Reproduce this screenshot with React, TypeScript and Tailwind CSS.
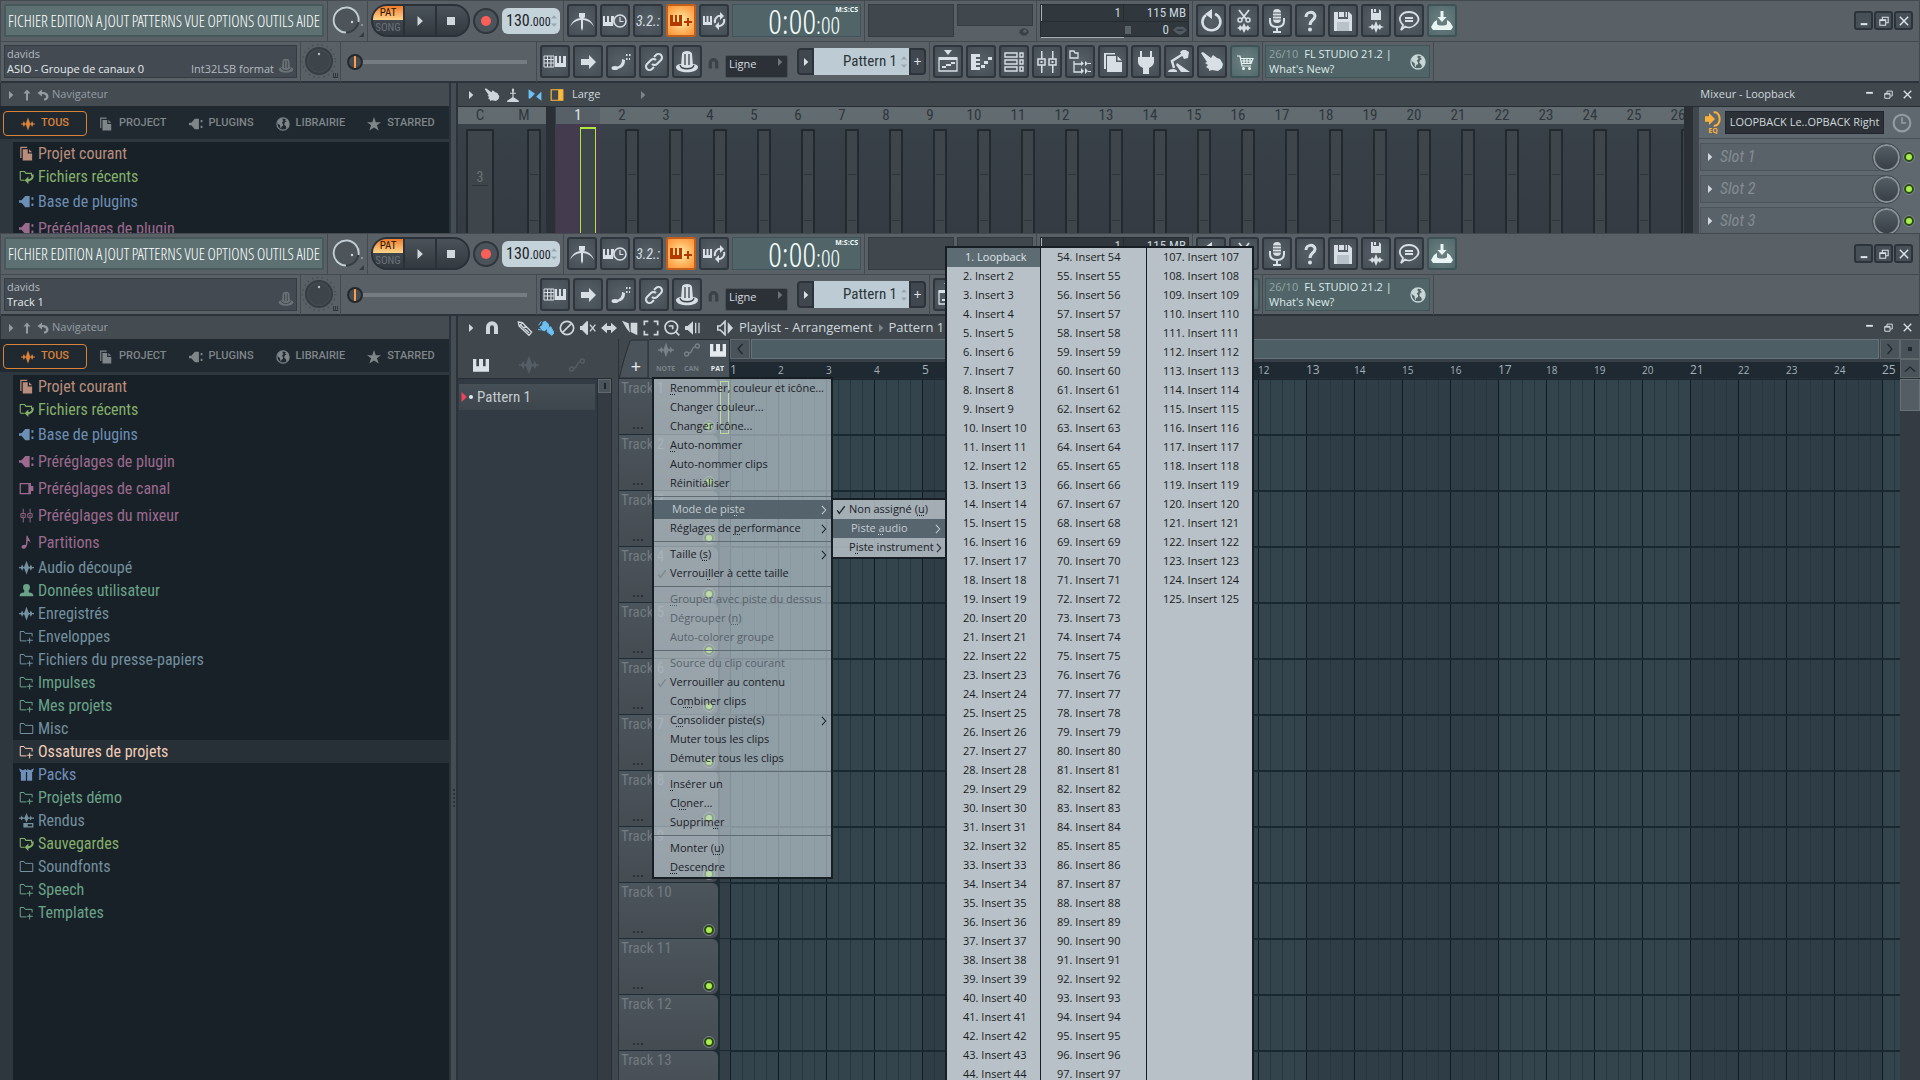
import type { ReactNode } from "react";

const light = "font-['Open_Sans_Condensed_Light','Roboto_Condensed',sans-serif]";
const cond = "font-['Roboto_Condensed','Open_Sans_Condensed',sans-serif]";
const sans = "font-['Open_Sans','Noto_Sans',sans-serif]";

const icons: Record<string, ReactNode> = {
  metronome: (
    <>
      <path d="M0 18c2-6 6-9 12-9s10 3 12 9c-3-5-7-7-12-7S3 13 0 18z" />
      <path d="M11 6h2v13l-1 3-1-3z" />
      <path d="M9 4h6v4l-3 3-3-3z" />
    </>
  ),
  wait: (
    <>
      <path d="M0 7h2v6h2V7h2v6h2V7h3v2l-1 8H0z" />
      <circle cx="17" cy="12" r="6" fill="none" stroke="currentColor" strokeWidth="1.500" />
      <path d="M17 8v4.500h3.500" fill="none" stroke="currentColor" strokeWidth="1.200" />
    </>
  ),
  pianoPlus: <path d="M1 6h3v7h2V6h2v7h2V6h3v11H1zM18 9h2v3h3v2h-3v3h-2v-3h-3v-2h3z" />,
  loop: (
    <>
      <path d="M1 7h2v6h1.500V7h2v6H8V7h2v9H1z" />
      <path d="M13 14c-1-4 2-8 7-7M22 10c1 4-2 8-7 7" fill="none" stroke="currentColor" strokeWidth="2" />
      <path d="M18 3l4 4-4 4zM17 21l-4-4 4-4z" />
    </>
  ),
  typing: (
    <>
      <path d="M1 6h10v11H1zM4.500 6v11M8 6v11M1 9.500h10M1 13h10" fill="none" stroke="currentColor" />
      <path d="M12 6h2v7h2V6h2v7h2V6h3v11H12z" />
    </>
  ),
  arrow: <path d="M5 9h8V5l7 7-7 7v-4H5z" />,
  slide: (
    <>
      <path d="M8 17c4-2 5-4 5-8l3 1c0 5-2 8-8 9z" />
      <ellipse cx="6" cy="18" rx="3.500" ry="2" />
      <path d="M17 4h1.500v2H17zM20 4h1.500v2H20zM17 8h1.500v2H17zM20 8h1v2h-1z" />
    </>
  ),
  link: (
    <path
      d="M10 14a3.500 3.500 0 0 0 5 0l4-4a3.500 3.500 0 0 0-5-5l-2 2M14 10a3.500 3.500 0 0 0-5 0l-4 4a3.500 3.500 0 0 0 5 5l2-2"
      fill="none"
      stroke="currentColor"
      strokeWidth="2"
    />
  ),
  knobHat: (
    <>
      <path d="M1 17c0-2 3-3 5-3h12c2 0 5 1 5 3 0 7-22 7-22 0z" />
      <path d="M7 4c0-4 10-4 10 0l1 12c0 3-12 3-12 0z" />
      <path d="M10 4v11M14 4v11M5 15c1 5 13 5 14 0" fill="none" stroke="#3c444b" strokeWidth="1.300" />
    </>
  ),
  magnet: <path d="M3 21V11a9 9 0 0 1 18 0v10h-6V11a3 3 0 0 0-6 0v10z" />,
  playlist: (
    <>
      <path d="M8 0h8l-4 5z" />
      <path d="M3 8h18v13H3z" fill="none" stroke="currentColor" strokeWidth="1.300" />
      <path d="M3 7h18v3H3zM6 16h4v2H6zM10 14h5v2h-5zM15 12h4v2h-4z" />
    </>
  ),
  pianoRoll: (
    <>
      <path d="M2 4h9v3H7v2h4v2H7v2h4v2H7v2h4v3H2z" />
      <path d="M12 15h4v3h-4zM15 11h4v3h-4zM19 7h4v3h-4z" />
    </>
  ),
  rack: (
    <path
      d="M3 3h12v4H3zM3 10h12v4H3zM3 17h12v4H3zM18 3h3v4h-3zM18 10h3v4h-3zM18 17h3v4h-3z"
      fill="none"
      stroke="currentColor"
      strokeWidth="1.400"
    />
  ),
  mixer: (
    <>
      <path d="M3 9h7v6H3zM14 9h7v6h-7z" fill="none" stroke="currentColor" strokeWidth="1.500" />
      <path d="M6 1h1.500v8H6zM6 15h1.500v8H6zM17 1h1.500v8H17zM17 15h1.500v8H17zM5.500 11h2v2h-2zM16.500 11h2v2h-2z" />
    </>
  ),
  tree: (
    <>
      <path d="M2 1h4l1 2h3v5H2zM6 11v11h7M6 14h7" fill="none" stroke="currentColor" strokeWidth="1.300" />
      <path d="M13 11l3 2.500-3 2.500zM17 11l3 2.500-3 2.500zM13 18l3 3-3 3zM17 18l3 3-3 3zM20 13h3v1h-3zM20 21h3v1h-3z" />
    </>
  ),
  copies: (
    <>
      <path d="M3 3h11v1.500H5V19H3z" />
      <path d="M6 6h9v6h6v10H6z" />
      <path d="M16.500 6l4.500 4.500h-4.500z" />
    </>
  ),
  plug: <path d="M6 1h2v6h8V1h2v6h2v5c0 3-3 5-5 6v6H9v-6c-2-1-5-3-5-6V7h2z" />,
  lamp: (
    <>
      <path d="M13 2l4-3 5 3-1 6-4 1z" />
      <path d="M16 4L5 11l2 7" fill="none" stroke="currentColor" strokeWidth="2.500" />
      <path d="M1 22c0-4 10-4 9 0zM10 13l13 9h-9l-5-7z" />
    </>
  ),
  hand: <path d="M1 3l2-1 8 6 2-3 4 3 3 1 3 5-1 4-4 3-6-1-3 1v-2l-3-2 2-2-3-2 2-1z" />,
  cart: (
    <>
      <path d="M4 6h3l2 10h9M7.500 8.500H20l-2 5H9M11 8v5M14 8v5M17 8v5M8 11h11" fill="none" stroke="currentColor" strokeWidth="1.200" />
      <circle cx="10.500" cy="18.500" r="1.500" />
      <circle cx="16.500" cy="18.500" r="1.500" />
    </>
  ),
  undo: (
    <>
      <path d="M7 6a9 8.500 0 1 0 9-1" fill="none" stroke="currentColor" strokeWidth="2.600" />
      <path d="M13 0v10L6 5z" />
    </>
  ),
  scissors: (
    <>
      <path d="M7 1l7 9M17 1l-7 9" stroke="currentColor" strokeWidth="1.800" />
      <circle cx="8" cy="11" r="2" fill="none" stroke="currentColor" strokeWidth="1.500" />
      <circle cx="16" cy="11" r="2" fill="none" stroke="currentColor" strokeWidth="1.500" />
      <path d="M5 19l2-1 1-2 2 2 2-4 2 4 2-2 1 2 2 1-2 1-1 2-2-2-2 4-2-4-2 2-1-2z" />
    </>
  ),
  mic: (
    <>
      <rect x="8" y="0" width="8" height="14" rx="4" />
      <path d="M8 4h8M8 7h8M8 10h8" stroke="#4a5259" />
      <path d="M5 9v3c0 4 3 6 7 6s7-2 7-6V9M12 18v4M8 23h8" fill="none" stroke="currentColor" strokeWidth="2" />
    </>
  ),
  help: (
    <>
      <path d="M8 8c0-6 9-6 9-1 0 4-5 4-5 9" fill="none" stroke="currentColor" strokeWidth="3" />
      <circle cx="12" cy="20.500" r="2" />
    </>
  ),
  save: (
    <>
      <path d="M3 3h4v7h10V3h1l3 3v16H3z" />
      <path d="M8 3h5v5H8zM14.500 3H16v5h-1.500z" />
      <path d="M6 13h12v9H6z" fill="#b9c2c8" />
    </>
  ),
  saveNew: (
    <>
      <path d="M7 0h2v4h6V0l2 2v9H7zM10 0h2v3h-2z" />
      <path d="M4 18l3-1 1-2 2 2 2-5 2 5 2-2 1 2 3 1-3 1-1 2-2-2-2 5-2-5-2 2-1-2z" />
    </>
  ),
  chat: (
    <path
      d="M4 21l2-5C-1 9 5 3 12 3s12 6 8 11-9 5-12 3.500zM8 9h8M8 12h8"
      fill="none"
      stroke="currentColor"
      strokeWidth="1.800"
    />
  ),
  download: (
    <>
      <path d="M10.500 2h3v6h3l-4.500 5L7.500 8h3z" />
      <path d="M4 13l3-2v4c1 2 9 2 10 0v-4l3 2 3 5-2 3H3l-2-3z" />
    </>
  ),
  pages: (
    <>
      <path d="M2 1h11v2H4v16H2z" />
      <path d="M6 5h8v7h7v11H6z" />
      <path d="M16 5l5 5h-5z" />
    </>
  ),
  folderBack: (
    <>
      <path d="M2 17V4h7l2 3h9v4M2 18h7" fill="none" stroke="currentColor" strokeWidth="1.700" />
      <path d="M23 8c2 8-3 11-8 12v4l-6-6 6-6v4c3 0 6-2 5-6z" />
    </>
  ),
  folder: <path d="M2 4h6l2 3h12v13H2z" fill="none" stroke="currentColor" strokeWidth="1.600" />,
  folderPlus: (
    <path
      d="M12 19H2V4h6l2 3h11v5M17 14v9M13 18h9"
      fill="none"
      stroke="currentColor"
      strokeWidth="1.600"
    />
  ),
  plugin: <path d="M0 10h4l6-7h7v18h-7l-6-7H0zM20 5h3v4h-3zM20 15h3v4h-3z" />,
  channel: (
    <>
      <path d="M2 4h16v16H2z" fill="none" stroke="currentColor" strokeWidth="2" />
      <path d="M15 4h4v16h-4zM19 8h4v8h-4z" />
    </>
  ),
  note: <path d="M12 1h2c0 4 5 6 4 12-1-3-2-4-4-4-1 8-2 13-7 13-6-1-2-8 4-6z" />,
  wave: (
    <path d="M0 11h3l2-4 2 4h1l1-2 3-8 3 8 1 2h1l2-4 2 4h3v2h-3l-2 4-2-4h-1l-1 2-3 8-3-8-1-2H7l-2 4-2-4H0z" />
  ),
  user: (
    <>
      <circle cx="12" cy="7" r="5.500" />
      <path d="M9 11h6l1 4c5 0 7 2 7 6H1c0-4 2-6 7-6z" />
    </>
  ),
  packs: <path d="M0 2l6 3 5-2v2h2V3l5 2 6-3-2 6h-1v14h-8V8h-2v14H3V8H2z" />,
  render: (
    <>
      <path d="M0 7h3l1-3 2 3h3l3-7 3 7h2l2-3 1 3h4v2h-4l-1 3-2-3h-2l-3 6-3-6H6l-2 3-1-3H0z" />
      <path d="M8 17h14v5H8z" fill="none" stroke="currentColor" strokeWidth="2" />
      <path d="M8 17h6v5H8z" />
    </>
  ),
  globe: (
    <>
      <circle cx="12" cy="12" r="10.500" fill="none" stroke="currentColor" strokeWidth="2" />
      <path d="M3 8c1-4 5-6 9-6l-1 3 2 2-3 3 2 2v3l-3 2v3c-2-1-2-4-2-6l-4-3zM15 5l4-1c3 3 4 7 3 11l-4 5-1-4-3-3 1-4 3-1z" />
    </>
  ),
  star: <path d="M12 0l3 9h9l-7 5 3 9-8-5-8 5 3-9-7-5h9z" />,
  up: <path d="M12 1l7 8h-5v14h-4V9H5z" />,
  back: <path d="M10 1v5c9 0 13 4 13 9 0 4-3 8-9 8v-4c3 0 4-2 4-4 0-3-3-5-8-5v5L1 8z" />,
  tri: <path d="M6 0l13 12L6 24z" />,
  stand: <path d="M10 3l2-3 2 3-1 5h4v2h-4v6l9 6v2H2v-2l9-6v-6H7V8h4z" />,
  swap: <path d="M1 2l11 8-8 8H1zM23 22l-9-7 8-8h1z" />,
  dock: (
    <>
      <path d="M2 3h20v18H2z" fill="none" stroke="currentColor" strokeWidth="2" />
      <path d="M14 3h8v18h-8z" />
    </>
  ),
  pencil: (
    <path d="M2 3l6 1 14 14-4 5L3 9zM5 7l13 12M8 4l-4 5M13 9l-4 5" fill="none" stroke="currentColor" strokeWidth="2" />
  ),
  brush: (
    <>
      <path d="M7 3l4-2 5 5 1 4-7 7-3-1-5-5 4-3z" />
      <path d="M1 8l4-6M0 14l5 1M14 13l5-3 5 9-3 4-7-5z" stroke="currentColor" strokeWidth="1.500" />
    </>
  ),
  none: (
    <>
      <circle cx="12" cy="12" r="10" fill="none" stroke="currentColor" strokeWidth="2.500" />
      <path d="M5 19L19 5" stroke="currentColor" strokeWidth="2.500" />
    </>
  ),
  mute: (
    <>
      <path d="M0 9h3l7-7h2v20h-2l-7-7H0z" />
      <path d="M15 7l8 10M23 7l-8 10" stroke="currentColor" strokeWidth="2" />
    </>
  ),
  slip: <path d="M0 12l9-8v5h6V4l9 8-9 8v-5H9v5z" />,
  slice: <path d="M0 1l10 4 2 14-5-6zM13 4h10v19l-10-5z" />,
  select: <path d="M2 8V2h6M16 2h6v6M22 16v6h-6M8 22H2v-6" fill="none" stroke="currentColor" strokeWidth="2.500" />,
  zoom: (
    <>
      <circle cx="11" cy="11" r="9.500" fill="none" stroke="currentColor" strokeWidth="2.500" />
      <path d="M17 17l6 6M7 9h6v5" fill="none" stroke="currentColor" strokeWidth="2.500" />
    </>
  ),
  playback: <path d="M0 9h4l8-7v20l-8-7H0zM15 4h2v16h-2zM20 4h2v16h-2z" />,
  speaker: (
    <>
      <path d="M1 9h4l7-7v20l-7-7H1z" fill="none" stroke="currentColor" strokeWidth="2.500" />
      <path d="M16 3l8 9-8 9z" />
    </>
  ),
  piano: <path d="M0 3h5v11h4V3h6v11h4V3h5v19H0z" />,
  automation: (
    <>
      <circle cx="4" cy="18" r="3" fill="none" stroke="currentColor" strokeWidth="2" />
      <circle cx="20" cy="6" r="3" fill="none" stroke="currentColor" strokeWidth="2" />
      <path d="M7 17c7-1 3-9 10-10" fill="none" stroke="currentColor" strokeWidth="2" />
    </>
  ),
  minimize: <path d="M4 17h16v5H4z" />,
  dash: <path d="M3 5h18v5H3z" />,
  restore: <path d="M2 9h14v13H2zM2 11h14M8 8V3h14v13h-5" fill="none" stroke="currentColor" strokeWidth="2.500" />,
  close: <path d="M2 2l20 20M22 2L2 22" stroke="currentColor" strokeWidth="3.500" />,
  eye: (
    <>
      <path d="M0 12c6-12 18-12 24 0-6 12-18 12-24 0z" />
      <circle cx="14" cy="10" r="4" fill="#596167" />
    </>
  ),
  lips: <path d="M0 12c5-5 8-8 12-5 4-3 7 0 12 5-5 5-9 8-12 8s-7-3-12-8zm4 0c6 2 10 2 16 0-6-2-10-2-16 0z" />,
  clock: (
    <>
      <circle cx="12" cy="12" r="10" fill="none" stroke="currentColor" strokeWidth="2.500" />
      <path d="M12 5v7h5" fill="none" stroke="currentColor" strokeWidth="2" />
    </>
  ),
  input: (
    <>
      <path d="M0 8h6V3l9 9-9 9v-5H0z" />
      <path d="M13 2c12-2 12 22 0 20" fill="none" stroke="currentColor" strokeWidth="3" />
    </>
  ),
  check: <path d="M3 13l5 7L21 3" fill="none" stroke="currentColor" strokeWidth="3" />,
  chevron: <path d="M7 2l9 10-9 10" fill="none" stroke="currentColor" strokeWidth="2.500" />,
};

function Icon({ name, className = "size-6" }: { name: string; className?: string }) {
  return (
    <svg viewBox="0 0 24 24" fill="currentColor" aria-hidden="true" className={`shrink-0 ${className}`}>
      {icons[name]}
    </svg>
  );
}

const Sep = ({ className = "" }: { className?: string }) => (
  <div className={`-my-1 w-px shrink-0 self-stretch bg-[#434b51] ${className}`} />
);

const tools: Record<string, string> = {
  dark: "border-[#2f363d] bg-[radial-gradient(circle,#576067,#464e55)] text-[#d8e0e5]",
  teal: "border-[#3d5356] bg-[radial-gradient(circle,#6c8283,#53686a)] text-[#e9f4f4]",
  lit: "border-[#c2601b] bg-[radial-gradient(circle,#fff0b0,#ffb25a_60%,#ff8f3a)] text-[#b23a00]",
};

function Tool({ name, tone = "dark", text }: { name: string; tone?: string; text?: string }) {
  return (
    <button
      aria-label={name}
      className={`flex h-[33px] w-[30px] shrink-0 items-center justify-center rounded-[3px] border-2 ${tools[tone]}`}
    >
      {text ? <span className={`text-sm italic ${cond}`}>{text}</span> : <Icon name={name} />}
    </button>
  );
}

function Spinner() {
  return (
    <span className="flex flex-col gap-0.5 text-[#98a7ae]">
      <Icon name="tri" className="size-1.5 -rotate-90" />
      <Icon name="tri" className="size-1.5 rotate-90" />
    </span>
  );
}

function Led({ label, className = "" }: { label: string; className?: string }) {
  return (
    <input
      type="checkbox"
      defaultChecked
      aria-label={label}
      className={`size-2.5 shrink-0 appearance-none rounded-full border-2 border-[#2c4a14] bg-[#a8f04e] outline outline-[#7b8488] ${className}`}
    />
  );
}

const menus = ["FICHIER", "EDITION", "AJOUT", "PATTERNS", "VUE", "OPTIONS", "OUTILS", "AIDE"];

function Toolbars({ hint, format }: { hint: string; format?: string }) {
  return (
    <header className="border-x border-[#434b51] bg-[#596167]">
      <div className="flex gap-[3px] border-y border-[#434b51] pt-[3px] pb-1 pl-[3px]">
        <nav className="flex h-[33px] w-[320px] shrink-0 items-center justify-between border-2 border-[#48595c] bg-[#5d7173] px-0.5">
          {menus.map((m) => (
            <button key={m} className={`text-base text-white ${light}`}>
              {m}
            </button>
          ))}
        </nav>
        <Sep />
        <svg viewBox="0 0 33 33" className="size-[33px] shrink-0" role="img" aria-label="Volume">
          <circle cx="15" cy="16" r="12.500" fill="#4d555b" stroke="#363d43" strokeWidth="2" />
          <path d="M15 28.500A12.500 12.500 0 1 1 27.500 18" fill="none" stroke="#c3ced4" strokeWidth="2" />
          <circle cx="21" cy="18" r="1.200" fill="#cfd8dd" />
          <circle cx="31" cy="21" r="1" fill="#9aa5ab" />
          <path d="M33 28v5h-5z" fill="#343b41" />
        </svg>
        <Sep />
        <div className="flex h-[33px] w-[99px] shrink-0 overflow-hidden rounded-2xl border-2 border-[#2a3138] bg-linear-to-b from-[#4b535a] to-[#32393f] text-[#cfd7db]">
          <div className={`flex w-8 flex-col border-r-2 border-[#2a3138] text-center text-[11px] leading-[14px] ${cond}`}>
            <button className="h-3.5 bg-linear-to-b from-[#f07a28] to-[#ffd68a] text-[#2b1a08]">PAT</button>
            <button className="h-[15px] text-[#697178]">SONG</button>
          </div>
          <button aria-label="Lecture" className="flex w-8 items-center justify-center border-r-2 border-[#2a3138]">
            <Icon name="tri" className="size-2.5" />
          </button>
          <button aria-label="Stop" className="flex flex-1 items-center justify-center pr-1">
            <span className="size-2 bg-[#cfd7db]" />
          </button>
        </div>
        <button
          aria-label="Enregistrer"
          className="mt-1 flex size-[26px] shrink-0 items-center justify-center rounded-full border-2 border-[#2f363c] bg-[#4c545b]"
        >
          <span className="size-2.5 rounded-full bg-[#fb5f59]" />
        </button>
        <div className="mt-1 flex h-[26px] w-[58px] shrink-0 items-center justify-between rounded-md bg-[#c4d2d9] px-1 text-[#1c252b]">
          <button className={`text-base leading-none ${cond}`} aria-label="Tempo">
            130<span className="text-xs">.000</span>
          </button>
          <Spinner />
        </div>
        <Sep />
        <Tool name="metronome" />
        <Tool name="wait" />
        <Tool name="decompte" text="3.2.:" />
        <Tool name="pianoPlus" tone="lit" />
        <Tool name="loop" />
        <div
          className={`flex h-[33px] w-[129px] shrink-0 items-center justify-end border border-[#40525a] bg-[#516467] pr-0.5 text-[#f0fbfb] ${light}`}
        >
          <span className="text-[34px] leading-8">0:00</span>
          <span className="flex w-[42px] flex-col">
            <span className={`self-end text-[7px] leading-2 font-bold ${sans}`}>M:S:CS</span>
            <span className="text-2xl leading-[22px]">:00</span>
          </span>
        </div>
        <Sep />
        <div className="h-[33px] w-[86px] shrink-0 border border-[#353c42] bg-[#40474d]" />
        <div className="flex h-[33px] w-[76px] shrink-0 flex-col items-end">
          <div className="h-[23px] w-full border border-[#353c42] bg-[#40474d]" />
          <Icon name="eye" className="mt-px mr-1 size-2.5 text-[#3a4147]" />
        </div>
        <Sep />
        <div
          className={`grid h-[33px] w-[149px] shrink-0 grid-cols-[1fr_64px] border border-[#252c32] bg-[#30373d] text-[13px] leading-4 text-[#c9d5dc] ${cond}`}
        >
          <span className="border-r border-l border-[#252c32] border-l-[#a9b2b7] pr-0.5 text-right">1</span>
          <span className="pr-0.5 text-right">115 MB</span>
          <span className="border-t border-b border-[#252c32] border-b-[#a9b2b7]" />
          <span className="flex items-center justify-end gap-1 border-t border-[#252c32] pr-px">
            <span className="mr-auto ml-px h-2 w-1.5 bg-[#5b646a]" />
            0<Icon name="lips" className="size-3.5 text-[#525b62]" />
          </span>
        </div>
        <Sep />
        <Tool name="undo" />
        <Tool name="scissors" />
        <Tool name="mic" />
        <Tool name="help" />
        <Tool name="save" />
        <Tool name="saveNew" />
        <Tool name="chat" />
        <Tool name="download" tone="teal" />
        <div className="ml-auto flex items-center gap-px pr-1.5">
          {["minimize", "restore", "close"].map((n) => (
            <button
              key={n}
              aria-label={n}
              className="flex size-[19px] items-center justify-center rounded-[3px] border-2 border-[#2c333a] bg-[#485057] text-[#dbe3e8]"
            >
              <Icon name={n} className="size-2.5" />
            </button>
          ))}
        </div>
      </div>

      <div className="flex gap-[3px] border-b-2 border-[#2c333a] py-[3px] pl-[3px]">
        <div
          className={`flex h-[33px] w-[293px] shrink-0 items-end justify-between border border-[#353c42] bg-[#434a51] px-0.5 pb-px text-[11px] leading-[15px] ${sans}`}
        >
          <div>
            <p className="text-[#b3bbc0]">davids</p>
            <p className="font-medium text-[#e3eaee]">{hint}</p>
          </div>
          <div className="flex items-end gap-1 text-[#b3bbc0]">
            {format}
            <Icon name="knobHat" className="mb-0.5 size-4 text-[#6a7277]" />
          </div>
        </div>
        <Sep />
        <svg viewBox="0 0 33 33" className="size-[33px] shrink-0 overflow-visible" role="img" aria-label="Pitch">
          <circle cx="15" cy="16" r="16.500" fill="none" stroke="#474f55" strokeDasharray="1.500 3.500" strokeWidth="1.500" />
          <circle cx="15" cy="16" r="13" fill="#434b51" stroke="#363d43" strokeWidth="2" />
          <circle cx="15" cy="16" r="10.500" fill="#3d454b" />
          <circle cx="15" cy="9" r="1.200" fill="#b5bfc4" />
          <path d="M29 28h1v5h-1zM29 32h5v1h-5zM31 28h1v4h-1zM33 28h1v5h-1z" fill="#30373c" />
        </svg>
        <Sep />
        <input
          type="range"
          defaultValue={0}
          aria-label="Hauteur"
          className="h-[33px] w-[189px] shrink-0 appearance-none bg-transparent pr-1.5 pl-[3px] [&::-webkit-slider-runnable-track]:h-1 [&::-webkit-slider-runnable-track]:bg-[#757d83] [&::-webkit-slider-thumb]:-mt-1.5 [&::-webkit-slider-thumb]:size-4 [&::-webkit-slider-thumb]:appearance-none [&::-webkit-slider-thumb]:rounded-full [&::-webkit-slider-thumb]:border-2 [&::-webkit-slider-thumb]:border-[#24292e] [&::-webkit-slider-thumb]:bg-[linear-gradient(90deg,#444b51_5px,#ff9d4c_5px_7px,#444b51_7px)]"
        />
        <Sep />
        <Tool name="typing" />
        <Tool name="arrow" />
        <Tool name="slide" />
        <Tool name="link" />
        <Tool name="knobHat" />
        <Icon name="magnet" className="mt-2.5 size-[17px] p-0.5 text-[#3b4248]" />
        <div className="relative mt-[5px] h-[23px] w-[63px] shrink-0">
          <select
            aria-label="Magnétisme"
            className={`h-full w-full appearance-none rounded-xs border border-[#4a5258] bg-[#2b3136] px-[3px] pb-1 text-[11px] text-[#d5dce0] ${sans}`}
          >
            <option>Ligne</option>
          </select>
          <Icon name="tri" className="pointer-events-none absolute top-2 right-1 size-2 text-[#6b747a]" />
        </div>
        <div className="mt-[3px] ml-[6px] flex h-[27px] w-[129px] shrink-0 items-stretch text-[#dbe3e8]">
          <button
            aria-label="Menu du pattern"
            className="flex w-[17px] items-center justify-center rounded-l border-2 border-[#2c333a] bg-[#40474e]"
          >
            <Icon name="tri" className="size-2" />
          </button>
          <button className="flex flex-1 items-center justify-end gap-1 bg-[#bdccd4] pr-0.5 text-[#2b343a]">
            <span className={`text-[15px] ${cond}`}>Pattern 1</span>
            <Spinner />
          </button>
          <button className="w-[17px] rounded-r border-2 border-[#2c333a] bg-[#40474e] text-sm leading-none">+</button>
        </div>
        <Sep />
        <Tool name="playlist" />
        <Tool name="pianoRoll" />
        <Tool name="rack" />
        <Tool name="mixer" />
        <Tool name="tree" />
        <Tool name="copies" />
        <Tool name="plug" />
        <Tool name="lamp" />
        <Tool name="hand" />
        <Tool name="cart" tone="teal" />
        <Sep className="-mx-px" />
        <a
          href="#news"
          className={`flex h-[33px] w-[165px] shrink-0 items-center justify-between border border-[#3f5659] bg-[#516467] px-[3px] text-[11px] leading-[15px] text-[#dcebeb] ${sans}`}
        >
          <span className="pb-0.5">
            <span className="mr-1.5 text-[#93a4a5]">26/10</span>FL STUDIO 21.2 |<br />
            What's New?
          </span>
          <Icon name="globe" className="size-4 text-[#c8d6d6]" />
        </a>
        <Sep />
      </div>
    </header>
  );
}

const tabs = [
  { icon: "wave", label: "TOUS" },
  { icon: "pages", label: "PROJECT" },
  { icon: "plugin", label: "PLUGINS" },
  { icon: "globe", label: "LIBRAIRIE" },
  { icon: "star", label: "STARRED" },
];

const tree = [
  { icon: "pages", label: "Projet courant", color: "text-[#b88d7c]" },
  { icon: "folderBack", label: "Fichiers récents", color: "text-[#84b06a]" },
  { icon: "plugin", label: "Base de plugins", color: "text-[#6c8fb5]", tall: true },
  { icon: "plugin", label: "Préréglages de plugin", color: "text-[#9b6a8e]", tall: true },
  { icon: "channel", label: "Préréglages de canal", color: "text-[#9b6a8e]", tall: true },
  { icon: "mixer", label: "Préréglages du mixeur", color: "text-[#9b6a8e]", tall: true },
  { icon: "note", label: "Partitions", color: "text-[#9b6a8e]", tall: true },
  { icon: "wave", label: "Audio découpé", color: "text-[#73909f]" },
  { icon: "user", label: "Données utilisateur", color: "text-[#6aa388]" },
  { icon: "wave", label: "Enregistrés", color: "text-[#73909f]" },
  { icon: "folderPlus", label: "Enveloppes", color: "text-[#73909f]" },
  { icon: "folderPlus", label: "Fichiers du presse-papiers", color: "text-[#73909f]" },
  { icon: "folderPlus", label: "Impulses", color: "text-[#6aa388]" },
  { icon: "folderPlus", label: "Mes projets", color: "text-[#6aa388]" },
  { icon: "folder", label: "Misc", color: "text-[#73909f]" },
  { icon: "folderPlus", label: "Ossatures de projets", color: "bg-[#283037] text-[#f3cdb7]" },
  { icon: "packs", label: "Packs", color: "text-[#6f8fb8]" },
  { icon: "folderPlus", label: "Projets démo", color: "text-[#6aa388]" },
  { icon: "render", label: "Rendus", color: "text-[#73909f]" },
  { icon: "folderBack", label: "Sauvegardes", color: "text-[#84b06a]" },
  { icon: "folder", label: "Soundfonts", color: "text-[#73909f]" },
  { icon: "folderPlus", label: "Speech", color: "text-[#6aa388]" },
  { icon: "folderPlus", label: "Templates", color: "text-[#6aa388]" },
];

function Browser() {
  return (
    <>
      <aside className="flex w-[449px] shrink-0 flex-col bg-[#2f373e]">
        <div
          className={`flex h-[23px] shrink-0 items-center gap-1 border-l border-[#2c333a] bg-[#444c52] pl-1.5 text-[11px] text-[#959da2] ${sans}`}
        >
          <Icon name="tri" className="size-2" />
          <Icon name="up" className="ml-0.5 size-3" />
          <Icon name="back" className="size-3" />
          <span className="-ml-px">Navigateur</span>
        </div>
        <div className="flex h-[33px] shrink-0 items-center gap-[22px] bg-[#212930] pt-0.5 pl-[3px] font-['Roboto',sans-serif] text-[11px] font-medium text-[#7f868a]">
          {tabs.map((t, i) => (
            <button
              key={t.label}
              className={`flex h-[25px] shrink-0 items-center gap-1.5 ${
                i === 0 ? "-mr-2.5 w-[84px] justify-center rounded border border-[#d9823a] text-[#d9823a]" : ""
              }`}
            >
              <Icon name={t.icon} className="size-3.5" />
              {t.label}
            </button>
          ))}
        </div>
        <ul className={`mt-[3px] ml-[13px] flex-1 bg-[#192128] text-base ${cond}`}>
          {tree.map((n) => (
            <li key={n.label}>
              <button className={`flex w-full items-center gap-1 pl-1.5 ${n.tall ? "h-[27px]" : "h-[23px]"} ${n.color}`}>
                <Icon name={n.icon} className="size-[15px]" />
                {n.label}
              </button>
            </li>
          ))}
        </ul>
      </aside>
      <div className="flex w-[9px] shrink-0 flex-col items-center justify-center gap-0.5 border-x-2 border-[#2c343a] bg-[#454d54] pt-50">
        {[0, 1, 2, 3, 4].map((d) => (
          <span key={d} className="size-0.5 bg-[#2b3238]" />
        ))}
      </div>
    </>
  );
}

function WindowButtons() {
  return (
    <div className="flex items-center gap-2.5 pr-2 text-[#dbe3e8]">
      {["dash", "restore", "close"].map((n) => (
        <button key={n} aria-label={n}>
          <Icon name={n} className="size-[9px]" />
        </button>
      ))}
    </div>
  );
}

function Meter({ wide }: { wide?: boolean }) {
  return (
    <div
      className={`mt-[5px] flex-1 rounded-t-xs border-2 border-b-0 border-[#22292f] bg-[#3e454b] ${
        wide ? "ml-2 w-7" : "ml-[25px] w-3.5"
      }`}
    >
      <div
        className={`border-b border-[#2d343a] text-center text-sm text-[#6d757a] ${
          wide ? "mx-1 h-[55px] pt-9 leading-5" : "mx-px h-11"
        }`}
      >
        {wide && 3}
      </div>
      {!wide && <div className="mx-px h-[46px] border-b border-[#2d343a]" />}
    </div>
  );
}

function Strip({ label, wide, selected }: { label: string; wide?: boolean; selected?: boolean }) {
  return (
    <div className={`flex w-11 shrink-0 flex-col text-center text-[15px] ${selected ? "bg-[#443b4f]" : ""} ${cond}`}>
      <div className={`h-[17px] leading-[17px] ${selected ? "bg-[#566066] text-[#e4eaed]" : "bg-[#626b70] text-[#2f373d]"}`}>
        {label}
      </div>
      {selected ? (
        <div className="mt-[3px] ml-6 w-4 flex-1 border border-t-2 border-b-0 border-[#aee63f] bg-[#3e454b]" />
      ) : (
        <Meter wide={wide} />
      )}
    </div>
  );
}

function MixerWindow() {
  return (
    <section className="flex min-w-0 flex-1 flex-col">
      <div
        className={`flex h-6 shrink-0 items-center border-b border-[#262d33] bg-[#40484e] pl-[9px] text-[11px] text-[#cfd7db] ${sans}`}
      >
        <Icon name="tri" className="size-2" />
        <Icon name="hand" className="ml-[9px] size-4" />
        <Icon name="stand" className="ml-1.5 size-3.5" />
        <Icon name="swap" className="ml-2 size-3.5 text-[#6cc0f2]" />
        <Icon name="dock" className="ml-2 size-3.5 text-[#fcb93a]" />
        <span className="ml-2">Large</span>
        <Icon name="tri" className="ml-[38px] size-2 text-[#7d868b]" />
        <h2 className="mr-[70px] ml-auto">Mixeur - Loopback</h2>
        <WindowButtons />
      </div>
      <div className="flex min-h-0 flex-1">
        <div className="flex bg-linear-to-b from-[#3a4249] to-[#343b42]">
          <Strip label="C" wide />
          <Strip label="M" />
        </div>
        <div className="w-[9px] shrink-0 bg-[#2a3036]" />
        <div className="flex min-w-0 flex-1 overflow-hidden bg-linear-to-b from-[#3a4249] to-[#343b42] pl-px">
          {Array.from({ length: 26 }, (_, i) => (
            <Strip key={i} label={String(i + 1)} selected={i === 0} />
          ))}
        </div>
        <div className="w-[9px] shrink-0 bg-[#2a3036]" />
        <div className="w-1.5 shrink-0 bg-[#40484e]" />
        <div className="w-[221px] shrink-0 bg-[#5f686e]">
          <div className={`flex h-8 items-center gap-1 border-b border-[#485056] pr-2 pl-1.5 ${sans}`}>
            <span className="flex w-4 flex-col items-center text-[#fbb13a]">
              <Icon name="input" className="size-4" />
              <span className="text-[7px] leading-[7px] font-bold">EQ</span>
            </span>
            <button className="h-[23px] flex-1 border border-[#20262b] bg-[#2b3136] text-[11px] whitespace-nowrap text-[#d0d8dc]">
              LOOPBACK Le..OPBACK Right
            </button>
            <Icon name="clock" className="ml-1 size-5 text-[#949da2]" />
          </div>
          <div className="flex flex-col gap-1 pt-1 pl-px">
            {[1, 2, 3].map((n) => (
              <div key={n} className="flex h-7 items-center">
                <div className="flex h-7 flex-1 items-center border border-[#4c555b] bg-[#596268] pl-[5px] text-[#d0d8dc]">
                  <Icon name="tri" className="size-2" />
                  <span className={`ml-1.5 text-base text-[#838c92] italic ${cond}`}>Slot {n}</span>
                </div>
                <span className="-ml-3 size-[27px] rounded-full border-2 border-[#899197] bg-linear-to-b from-[#545d64] to-[#394147] outline outline-[#40484e]" />
                <Led label={`Slot ${n}`} className="mr-1.5 ml-1" />
              </div>
            ))}
          </div>
        </div>
      </div>
    </section>
  );
}

const playlistTools = ["pencil", "brush", "none", "mute", "slip", "slice", "select", "zoom", "playback"];

const modes = [
  { icon: "wave", label: "NOTE" },
  { icon: "automation", label: "CAN" },
  { icon: "piano", label: "PAT" },
];

function PlaylistWindow() {
  return (
    <section className="flex min-w-0 flex-1 flex-col bg-[#40484e]">
      <div className={`flex h-[23px] shrink-0 items-center pl-[9px] text-[13px] text-[#cfd7db] ${sans}`}>
        <Icon name="tri" className="size-2" />
        <Icon name="magnet" className="ml-[9px] size-4" />
        <div className="ml-[17px] flex gap-[5px]">
          {playlistTools.map((t) => (
            <button key={t} aria-label={t} className={t === "brush" ? "text-[#6cc0f2]" : ""}>
              <Icon name={t} className="size-4" />
            </button>
          ))}
        </div>
        <Icon name="speaker" className="ml-4 size-4" />
        <h2 className="ml-1.5 flex items-center gap-1 whitespace-nowrap">
          Playlist - Arrangement
          <Icon name="tri" className="size-2 text-[#7d868b]" />
          Pattern 1
        </h2>
        <div className="ml-auto">
          <WindowButtons />
        </div>
      </div>
      <div className="flex min-h-0 flex-1">
        <div className="flex w-[154px] shrink-0 flex-col">
          <div className="flex h-10 items-center gap-[30px] border-b border-[#262d33] pt-3 pl-[15px] text-[#555e64]">
            <Icon name="piano" className="size-4 text-[#dbe3e8]" />
            <Icon name="wave" className="size-5" />
            <Icon name="automation" className="size-4" />
          </div>
          <div className="flex flex-1">
            <div className="flex-1 bg-[#323b43] pt-[5px]">
              <button
                className={`ml-px flex h-[26px] w-[136px] items-center bg-linear-to-b from-[#474f56] to-[#3e464d] text-[15px] text-[#c3ccd1] ${cond}`}
              >
                <Icon name="tri" className="size-2.5 text-[#f2405f]" />
                <span className="mr-1 size-1 rounded-full bg-[#e4eaed]" />
                Pattern 1
              </button>
            </div>
            <div className="w-[15px] border-x border-[#262d33] bg-[#343b42]">
              <div className="flex h-3.5 items-center justify-center border border-[#5f686d] bg-[#4a5359]">
                <span className="h-1.5 w-0.5 bg-[#20272c]" />
              </div>
            </div>
          </div>
        </div>
        <div className="w-[7px] shrink-0 border-r border-[#2b3238]" />

        <div className="flex min-w-0 flex-1 flex-col">
          <div className="flex h-10 shrink-0 border-b border-[#262d33]">
            <div className="relative flex w-[30px] shrink-0 items-end justify-center text-[#e4eaed]">
              <svg viewBox="0 0 30 39" className="absolute inset-0 h-full w-full" aria-hidden="true">
                <path d="M.5 39C2 30 8 10 10 5c1-3 2-4 4-4h15v38z" fill="#4a5359" stroke="#262d33" />
              </svg>
              <button aria-label="Ajouter une piste" className="relative pl-1 text-lg leading-6">
                +
              </button>
            </div>
            <div className="flex w-[81px] shrink-0 gap-[5px] border-t border-r border-[#262d33] bg-[#4a5359] pl-1.5">
              {modes.map((m) => (
                <button
                  key={m.label}
                  className={`flex w-[21px] flex-col items-center justify-between pt-0.5 pb-1 text-[7px] leading-[10px] font-bold ${sans} ${
                    m.label === "PAT" ? "text-[#e4eaed]" : "text-[#788187]"
                  }`}
                >
                  <Icon name={m.icon} className="size-4" />
                  {m.label}
                </button>
              ))}
            </div>
            <div className="flex min-w-0 flex-1 flex-col">
              <div className="flex h-5 gap-px text-[#1f272d]">
                <button aria-label="Gauche" className="flex w-5 items-center justify-center border border-[#5f686d] bg-[#4a5359]">
                  <Icon name="chevron" className="size-3 rotate-180" />
                </button>
                <div className="flex-1 border border-[#64737a] bg-[#4e5e65]" />
                <button aria-label="Droite" className="flex w-5 items-center justify-center border border-[#5f686d] bg-[#4a5359]">
                  <Icon name="chevron" className="size-3" />
                </button>
              </div>
              <div className={`flex flex-1 overflow-hidden border-t-3 border-[#363f46] bg-[#1e2931] text-[#a5b1b8] ${sans}`}>
                {Array.from({ length: 25 }, (_, i) => (
                  <span key={i} className={`w-12 shrink-0 leading-4 ${i % 4 ? "text-[10px]" : "text-xs"}`}>
                    {i + 1}
                  </span>
                ))}
              </div>
            </div>
            <div className="flex w-5 shrink-0 flex-col text-[#1f272d]">
              <div className="flex h-5 items-center justify-center border border-[#5f686d] bg-[#4a5359]">
                <span className="size-1 bg-[#20272c]" />
              </div>
              <button aria-label="Haut" className="flex flex-1 items-center justify-center border border-[#5f686d] bg-[#4a5359]">
                <Icon name="chevron" className="size-3 -rotate-90" />
              </button>
            </div>
          </div>

          <div className="flex min-h-0 flex-1">
            <div className="w-[101px] shrink-0 overflow-hidden bg-[#1f2c34]">
              {Array.from({ length: 13 }, (_, i) => (
                <div
                  key={i}
                  className="mr-0.5 mb-px flex h-[55px] flex-col justify-between rounded-r-md bg-linear-to-b from-[#4c555b] to-[#444c52] pl-0.5"
                >
                  <span className={`text-[15px] leading-[18px] text-[#727b80] ${cond}`}>Track {i + 1}</span>
                  <span className="flex items-end justify-between pr-1 pb-[3px] pl-3">
                    <span className="flex gap-0.5 pb-0.5">
                      <i className="size-0.5 bg-[#2b3238]" />
                      <i className="size-0.5 bg-[#2b3238]" />
                      <i className="size-0.5 bg-[#2b3238]" />
                    </span>
                    <Led label={`Track ${i + 1}`} />
                  </span>
                </div>
              ))}
            </div>
            <div className="w-2.5 shrink-0 bg-[repeating-linear-gradient(180deg,#323f47_0_55px,#1a2830_55px_56px)]">
              <div className="mt-0.5 h-[53px] w-[9px] border border-[#aee63f]" />
            </div>
            <div className="min-w-0 flex-1 bg-[repeating-linear-gradient(180deg,#1a2830_0_1px,transparent_1px_55px,#1a2830_55px_56px),repeating-linear-gradient(90deg,#0f1c25_0_1px,transparent_1px_48px),repeating-linear-gradient(90deg,#243640_0_1px,transparent_1px_12px),repeating-linear-gradient(90deg,#33444d_0_192px,#2e3d46_192px_384px)]" />
            <div className="w-5 shrink-0 bg-[#343b42]">
              <div className="h-8 border border-[#697277] bg-[#545d63]" />
            </div>
          </div>
        </div>
      </div>
    </section>
  );
}

// hot is the underlined shortcut letter
type Entry = {
  label: string;
  hot?: string;
  sub?: boolean;
  checked?: boolean;
  off?: boolean;
  active?: boolean;
  dim?: boolean;
};

const trackMenu: Entry[][] = [
  [
    { label: "Renommer, couleur et icône...", hot: "R" },
    { label: "Changer couleur..." },
    { label: "Changer icône..." },
    { label: "Auto-nommer", hot: "A" },
    { label: "Auto-nommer clips" },
    { label: "Réinitialiser" },
  ],
  [
    { label: "Mode de piste", hot: "t", sub: true, active: true },
    { label: "Réglages de performance", hot: "p", sub: true },
  ],
  [
    { label: "Taille (s)", hot: "s", sub: true },
    { label: "Verrouiller à cette taille", hot: "l", checked: true, dim: true },
  ],
  [
    { label: "Grouper avec piste du dessus", hot: "G", off: true },
    { label: "Dégrouper (n)", hot: "n", off: true },
    { label: "Auto-colorer groupe", off: true },
  ],
  [
    { label: "Source du clip courant", off: true },
    { label: "Verrouiller au contenu", checked: true, dim: true },
    { label: "Combiner clips", hot: "m" },
    { label: "Consolider piste(s)", hot: "o", sub: true },
    { label: "Muter tous les clips" },
    { label: "Démuter tous les clips" },
  ],
  [
    { label: "Insérer un", hot: "I" },
    { label: "Cloner...", hot: "o" },
    { label: "Supprimer", hot: "e" },
  ],
  [
    { label: "Monter (u)", hot: "u" },
    { label: "Descendre", hot: "D" },
  ],
];

function MenuItem({ label, hot, sub, checked, off, active, dim }: Entry) {
  const at = hot ? label.indexOf(hot) : -1;
  return (
    <button
      role="menuitem"
      disabled={off}
      className={`flex h-[19px] w-full items-center pr-0.5 ${
        active ? "bg-[#4f5d66]/90 pl-0.5 text-[#c3ccd2]" : off ? "text-[#56626a]" : "text-[#1b2228]"
      }`}
    >
      <span className="w-4 shrink-0 pl-[3px]">
        {checked && <Icon name="check" className={`size-2.5 ${dim ? "text-[#7d888e]" : ""}`} />}
      </span>
      <span className="flex-1 text-left whitespace-nowrap">
        {at < 0 ? (
          label
        ) : (
          <>
            {label.slice(0, at)}
            <u className="decoration-dotted underline-offset-2">{label[at]}</u>
            {label.slice(at + 1)}
          </>
        )}
      </span>
      {sub && <Icon name="chevron" className="size-2.5" />}
    </button>
  );
}

function TrackMenu() {
  return (
    <div className={`absolute top-36 left-[652px] w-[181px] border-2 border-[#171e24] bg-[#c8d3db]/63 text-[11px] ${sans}`}>
      {trackMenu.map((group, g) => (
        <div key={g}>
          {g > 0 && <hr className="my-[3px] border-[#5f6b72]" />}
          {group.map((e) => (
            <MenuItem key={e.label} {...e} />
          ))}
        </div>
      ))}
      <div className="absolute top-[119px] left-[177px] w-[116px] border-2 border-[#171e24] bg-[#b9c1c8]/85">
        <MenuItem label="Non assigné (u)" hot="u" checked />
        <MenuItem label="Piste audio" hot="a" sub active />
        <MenuItem label="Piste instrument" hot="i" sub />
      </div>
    </div>
  );
}

const inserts = Array.from({ length: 125 }, (_, i) => (i === 0 ? "1. Loopback" : `${i + 1}. Insert ${i + 1}`));

function InsertMenu() {
  return (
    <div
      className={`absolute top-[13px] left-[945px] flex border-2 border-[#171e24] bg-[#b9c1c8] text-[11px] text-[#171c20] ${sans}`}
    >
      {[inserts.slice(0, 53), inserts.slice(53, 106), inserts.slice(106)].map((col, c) => (
        <div key={c} className={c === 0 ? "w-[93px]" : "w-[106px] border-l border-[#171e24]"}>
          {col.map((label) => (
            <button
              key={label}
              role="menuitem"
              className={`block h-[19px] w-full text-left ${label === inserts[0] ? "bg-[#5d6b73] pl-[18px] text-[#dde4e8]" : "pl-4"}`}
            >
              {label}
            </button>
          ))}
        </div>
      ))}
    </div>
  );
}

export default function App() {
  return (
    <main className="flex h-screen flex-col overflow-hidden bg-[#343c43]">
      <div className="flex h-[233px] shrink-0 flex-col overflow-hidden">
        <Toolbars hint="ASIO - Groupe de canaux 0" format="Int32LSB format" />
        <div className="flex min-h-0 flex-1 overflow-hidden">
          <Browser />
          <MixerWindow />
        </div>
      </div>
      <div className="relative flex min-h-0 flex-1 flex-col overflow-hidden">
        <Toolbars hint="Track 1" />
        <div className="flex min-h-0 flex-1">
          <Browser />
          <PlaylistWindow />
        </div>
        <TrackMenu />
        <InsertMenu />
      </div>
    </main>
  );
}
